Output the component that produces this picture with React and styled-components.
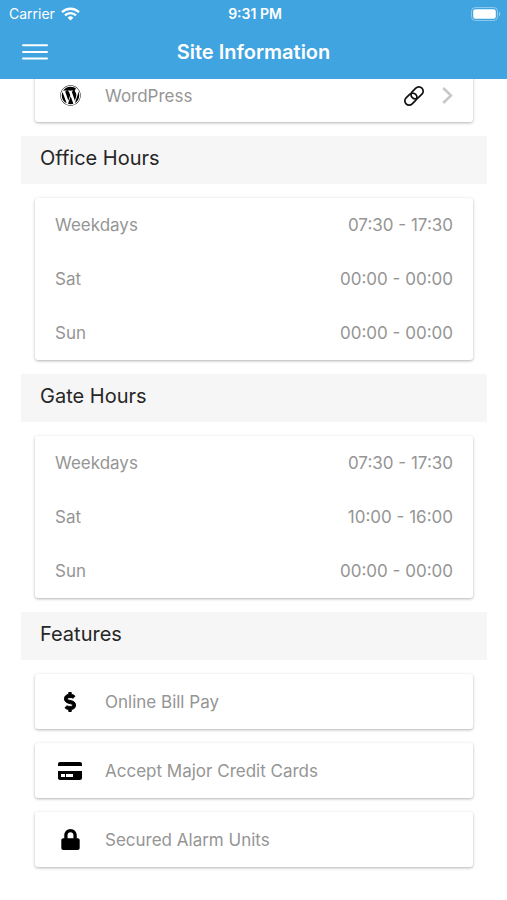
import React from 'react'
import styled, { createGlobalStyle } from 'styled-components';
import { FaWordpress, FaDollarSign, FaLock } from 'react-icons/fa';

const WifiIcon = () => (
    <svg width="19" height="14" viewBox="0 0 19 14" fill="none" stroke="#fff" strokeWidth="2.4" aria-hidden="true">
        <path d="M1 5.2a12.2 12.2 0 0 1 17 0" />
        <path d="M4 8.4a7.8 7.8 0 0 1 11 0" />
        <path d="M9.5 13.6 6.6 10.7a4.1 4.1 0 0 1 5.8 0z" fill="#fff" stroke="none" />
    </svg>
)

const BatteryIcon = () => (
    <svg width="30" height="14" viewBox="0 0 30 14" aria-hidden="true">
        <rect x="0.5" y="0.5" width="26" height="13" rx="3.8" fill="none" stroke="#fff" strokeOpacity="0.4" />
        <rect x="2.2" y="2.2" width="22.6" height="9.6" rx="2.2" fill="#fff" />
        <path d="M28 4.8c1.5.5 1.5 3.9 0 4.4z" fill="#fff" fillOpacity="0.5" />
    </svg>
)

const MenuIcon = () => (
    <svg width="26" height="16" viewBox="0 0 26 16" stroke="#fff" strokeWidth="2" strokeLinecap="round" aria-hidden="true">
        <path d="M1 1.2h24M1 8h24M1 14.6h24" />
    </svg>
)

const ChainIcon = () => (
    <svg width="22" height="22" viewBox="0 0 22 22" fill="none" stroke="#111" strokeWidth="1.7" aria-hidden="true">
        <rect x="-6.8" y="-4.3" width="13.6" height="8.6" rx="4.3" transform="translate(14.1 7.9) rotate(-45)" />
        <rect x="-6.8" y="-4.3" width="13.6" height="8.6" rx="4.3" transform="translate(7.9 14.1) rotate(-45)" />
    </svg>
)

const ChevronIcon = () => (
    <svg width="11" height="17" viewBox="0 0 11 17" fill="none" stroke="#c8c8ca" strokeWidth="2.5" aria-hidden="true">
        <path d="M1.2 1l7.8 7.5L1.2 16" />
    </svg>
)

const CardIcon = () => (
    <svg width="24" height="18" viewBox="0 0 24 18" fill="currentColor" aria-hidden="true">
        <path d="M0 4V2C0 .9.9 0 2 0h20c1.1 0 2 .9 2 2v2z" />
        <path
            fillRule="evenodd"
            d="M0 9h24v7c0 1.100-.9 2-2 2H2c-1.100 0-2-.9-2-2zM3 12v3h4v-3zM8 12v3h7v-3z"
        />
    </svg>
)

const officeHours = [
    { day: 'Weekdays', time: '07:30 - 17:30' },
    { day: 'Sat', time: '00:00 - 00:00' },
    { day: 'Sun', time: '00:00 - 00:00' },
];

const gateHours = [
    { day: 'Weekdays', time: '07:30 - 17:30' },
    { day: 'Sat', time: '10:00 - 16:00' },
    { day: 'Sun', time: '00:00 - 00:00' },
];

const features = [
    { icon: <FaDollarSign size={20} stroke="currentColor" strokeWidth={24} />, label: 'Online Bill Pay' },
    { icon: <CardIcon />, label: 'Accept Major Credit Cards' },
    { icon: <FaLock size={21} />, label: 'Secured Alarm Units' },
];

const Hours = ({ title, items }) => (
    <>
        <SectionTitle>{title}</SectionTitle>
        <HoursCard>
            <HoursTable aria-label={title}>
                <tbody>
                    {items.map(({ day, time }) => (
                        <tr key={day}>
                            <th scope="row">{day}</th>
                            <td>{time}</td>
                        </tr>
                    ))}
                </tbody>
            </HoursTable>
        </HoursCard>
    </>
)

const App = () => {
    return (
        <>
            <GlobalStyle />
            <Header>
                <StatusBar>
                    <Carrier>Carrier <WifiIcon /></Carrier>
                    <Clock>9:31 PM</Clock>
                    <Battery><BatteryIcon /></Battery>
                </StatusBar>
                <NavBar>
                    <MenuButton type="button" aria-label="Menu"><MenuIcon /></MenuButton>
                    <h1>Site Information</h1>
                </NavBar>
            </Header>
            <Content>
                <LinkCard href="#wordpress">
                    <IconBox><FaWordpress size={21} /></IconBox>
                    <Label>WordPress</Label>
                    <LinkIcons>
                        <ChainIcon />
                        <ChevronIcon />
                    </LinkIcons>
                </LinkCard>
                <Hours title="Office Hours" items={officeHours} />
                <Hours title="Gate Hours" items={gateHours} />
                <SectionTitle>Features</SectionTitle>
                <FeatureList>
                    {features.map(({ icon, label }) => (
                        <FeatureCard key={label}>
                            <IconBox>{icon}</IconBox>
                            <Label>{label}</Label>
                        </FeatureCard>
                    ))}
                </FeatureList>
            </Content>
        </>
    )
}

export default App;

const GlobalStyle = createGlobalStyle`
    * {
        box-sizing: border-box;
    }

    body {
        margin: 0;
        background-color: #fff;
        font-family: Inter, "Liberation Sans", sans-serif;
    }
`

const Header = styled.header`
    position: sticky;
    top: 0;
    z-index: 1;
    background-color: #3fa4df;
    color: #fff;
`

const StatusBar = styled.div`
    display: grid;
    grid-template-columns: 1fr auto 1fr;
    align-items: center;
    height: 27px;
    padding: 0 6px 0 9px;
    font-size: 14px;
    line-height: 20px;
`

const Carrier = styled.span`
    display: flex;
    align-items: center;
    gap: 6px;
`

const Clock = styled.span`
    font-weight: 600;
`

const Battery = styled.span`
    display: flex;
    justify-content: flex-end;
`

const NavBar = styled.div`
    display: grid;
    grid-template-columns: 48px 1fr 48px;
    align-items: center;
    height: 52px;
    padding: 0 12px 2px;

    h1 {
        margin: 0;
        font-size: 20px;
        line-height: 24px;
        font-weight: 600;
        text-align: center;
    }
`

const MenuButton = styled.button`
    display: flex;
    align-items: center;
    height: 44px;
    padding: 0 10px;
    border: 0;
    background: none;
    cursor: pointer;
`

const Content = styled.main`
    display: flex;
    flex-direction: column;
    gap: 14px;
    margin-top: -10px;
    padding: 0 20px 34px 21px;
`

const SectionTitle = styled.h2`
    margin: 0;
    padding: 10px 19px 14px;
    background-color: #f6f6f6;
    color: #262626;
    font-size: 20px;
    line-height: 24px;
    font-weight: 400;
`

const Card = styled.div`
    border-radius: 3px;
    background-color: #fff;
    box-shadow: 0 1px 3px rgba(0, 0, 0, 0.3);
    color: #959595;
    font-size: 17px;
    line-height: 24px;
`

const HoursCard = styled(Card)`
    margin: 0 14px;
    padding: 0 20px;
`

const HoursTable = styled.table`
    width: 100%;
    border-collapse: collapse;

    th,
    td {
        height: 54px;
        padding: 0;
        font-weight: 400;
        text-align: left;
    }

    td {
        text-align: right;
    }
`

const LinkCard = styled(Card).attrs({ as: 'a' })`
    display: flex;
    align-items: center;
    gap: 20px;
    height: 53px;
    margin: 0 14px;
    padding: 0 20px;
    text-decoration: none;
`

const LinkIcons = styled.span`
    display: flex;
    align-items: center;
    gap: 17px;
`

const FeatureList = styled.ul`
    display: flex;
    flex-direction: column;
    gap: 14px;
    margin: 0 14px;
    padding: 0;
    list-style: none;
`

const FeatureCard = styled(Card).attrs({ as: 'li' })`
    display: flex;
    align-items: center;
    gap: 20px;
    height: 55px;
    padding: 0 20px;
`

const IconBox = styled.span`
    display: flex;
    justify-content: center;
    width: 30px;
    color: #000;
`

const Label = styled.span`
    flex: 1;
`
